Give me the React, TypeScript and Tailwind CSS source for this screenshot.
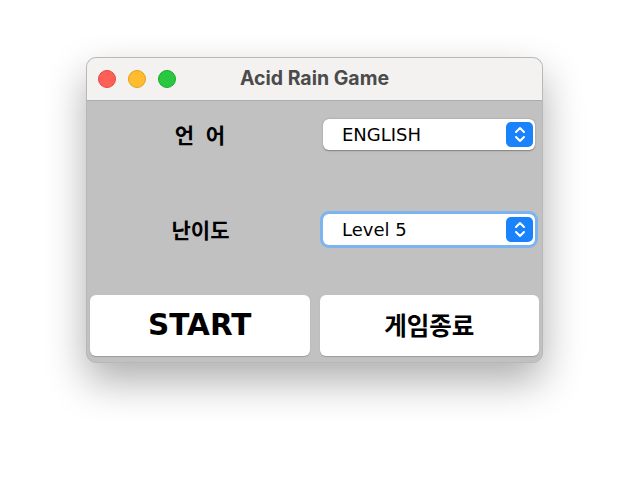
export default function App() {
  return (
    <div className="w-full h-[477px] bg-white pt-[57px] pl-[86px]">
      <div
        className="w-[457px] h-[306px] rounded-[10px] overflow-hidden border border-[#b8b8b8] shadow-[0_18px_40px_rgba(0,0,0,0.32)] flex flex-col bg-[#c1c1c1]"
        style={{ fontFamily: '"DejaVu Sans", "Noto Sans CJK KR", sans-serif' }}
      >
        {/* Title bar */}
        <div className="relative h-[43px] shrink-0 bg-[#f3f2f1] border-b border-[#acacac] flex items-center pl-[11px] gap-[12px]">
          <span className="w-[18px] h-[18px] rounded-full bg-[#fe5f57] border border-[#e2463f]" />
          <span className="w-[18px] h-[18px] rounded-full bg-[#febc2e] border border-[#e1a116]" />
          <span className="w-[18px] h-[18px] rounded-full bg-[#28c840] border border-[#1aab29]" />
          <div
            className="absolute inset-0 flex items-center justify-center text-[19.5px] font-bold text-[#4b4b4b]"
            style={{ fontFamily: 'Inter, "Liberation Sans", sans-serif' }}
          >
            Acid Rain Game
          </div>
        </div>

        {/* Content */}
        <div className="flex-1 flex flex-col pt-[18px] px-[3px]">
          <div className="grid grid-cols-[229px_1fr] h-[31px] items-center">
            <div
              className="text-center text-[21px] font-bold text-black pr-[9px] [word-spacing:7px]"
              style={{ fontFamily: '"Noto Sans CJK KR", sans-serif' }}
            >
              언 어
            </div>
            <div className="pl-[4px]">
              <Select value="ENGLISH" />
            </div>
          </div>

          <div className="grid grid-cols-[229px_1fr] h-[31px] items-center mt-[64px]">
            <div className="text-center text-[21px] font-bold text-black pr-[8px]" style={{ fontFamily: '"Noto Sans CJK KR", sans-serif' }}>
              난이도
            </div>
            <div className="pl-[4px]">
              <Select value="Level 5" focused />
            </div>
          </div>

          <div className="flex gap-[10px] mt-[50px] h-[61px]">
            <button className="flex-1 bg-white rounded-[6px] shadow-[0_1px_1px_rgba(0,0,0,0.2)] text-[29.5px] font-bold text-black flex items-center justify-center">
              START
            </button>
            <button
              className="flex-1 bg-white rounded-[6px] shadow-[0_1px_1px_rgba(0,0,0,0.2)] text-[24.5px] font-bold text-black flex items-center justify-center"
              style={{ fontFamily: '"Noto Sans CJK KR", sans-serif' }}
            >
              게임종료
            </button>
          </div>
        </div>
      </div>
    </div>
  );
}

function Select({ value, focused }: { value: string; focused?: boolean }) {
  return (
    <div
      className={`w-[212px] h-[31px] bg-white rounded-[6px] flex items-center justify-between pl-[19px] pr-[2px] ${
        focused
          ? "ring-[3px] ring-[#7cb4f0] h-[28px]"
          : "shadow-[0_0.5px_1.5px_rgba(0,0,0,0.35)]"
      }`}
    >
      <span className="text-[18px] text-black">{value}</span>
      <span className="w-[27px] h-[25px] rounded-[5px] bg-[#1a82fb] flex items-center justify-center">
        <svg width="12" height="17" viewBox="0 0 12 17" fill="none" stroke="white" strokeWidth="2" strokeLinecap="round" strokeLinejoin="round">
          <path d="M2 6 L6 2 L10 6" />
          <path d="M2 11 L6 15 L10 11" />
        </svg>
      </span>
    </div>
  );
}
